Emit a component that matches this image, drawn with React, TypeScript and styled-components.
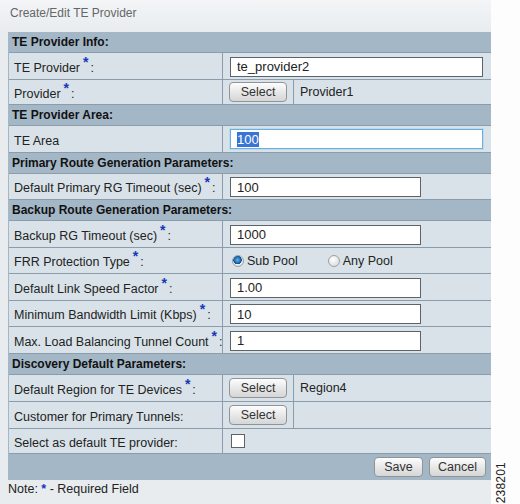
import React from 'react';
import styled, { createGlobalStyle } from 'styled-components';

const GlobalStyle = createGlobalStyle`
  html, body {
    margin: 0;
    padding: 0;
    background: #ffffff;
  }
  body {
    font-family: "Liberation Sans", Arial, sans-serif;
    font-size: 12px;
    color: #222;
  }
`;

const Page = styled.div`
  display: flex;
  width: 520px;
  height: 504px;
  overflow: hidden;
`;

const Main = styled.div`
  width: 491px;
  background: #e8ecef;
  padding-left: 8px;
  box-sizing: border-box;
  display: flex;
  flex-direction: column;
`;

const Side = styled.div`
  flex: 1;
  background: #fdfdfd;
  display: flex;
  align-items: flex-end;
  justify-content: center;
  padding-bottom: 1px;
`;

const FigNumber = styled.span`
  writing-mode: vertical-rl;
  transform: rotate(180deg);
  font-size: 12px;
  color: #222;
  letter-spacing: 0.2px;
  margin-left: -9px;
`;

const Title = styled.div`
  height: 32px;
  padding: 6px 0 0 10px;
  margin-left: -8px;
  box-sizing: border-box;
  color: #666;
  font-size: 12px;
  background: linear-gradient(#f3f5f7, #e8ecef);
`;

const Table = styled.div`
  width: 483px;
  display: flex;
  flex-direction: column;
  border-left: 1px solid #a4b7c7;
`;

const HeaderRow = styled.div`
  height: 20px;
  background: #a4b7c7;
  border-bottom: 1px solid #8b9dab;
  display: flex;
  align-items: center;
  padding-left: 3px;
  font-weight: bold;
  font-size: 12px;
  color: #111;
`;

const Row = styled.div<{ $h?: number }>`
  height: ${(p) => p.$h ?? 26}px;
  display: grid;
  grid-template-columns: 213px 1px 1fr;
  background: #d9e2e9;
  border-bottom: 1px solid #8b9dab;
`;

const Divider = styled.div`
  background: #8b9dab;
`;

const Label = styled.div`
  display: flex;
  align-items: center;
  padding: 3px 0 0 5px;
  font-size: 12.5px;
  color: #222;
  white-space: nowrap;
`;

const Req = styled.span`
  color: #1736b8;
  font-size: 14px;
  font-weight: bold;
  position: relative;
  top: -6px;
  margin: 0 2px 0 3px;
`;

const Value = styled.div`
  display: flex;
  align-items: center;
  padding-left: 7px;
  gap: 6px;
`;

const TextInput = styled.input<{ $w?: number }>`
  width: ${(p) => p.$w ?? 191}px;
  height: 20px;
  box-sizing: border-box;
  border: 1px solid #5d6469;
  background: #fff;
  font-family: "Liberation Sans", Arial, sans-serif;
  font-size: 13px;
  color: #222;
  padding: 0 6px;
  margin: 1px 0 0 0;
  outline: none;
`;

const FocusedInput = styled.div`
  width: 253px;
  height: 20px;
  box-sizing: border-box;
  border: 1px solid #6faed6;
  box-shadow: 0 0 0 1px #b7dcf0;
  background: #fff;
  font-size: 13px;
  display: flex;
  align-items: center;
  padding-left: 6px;
`;

const Selected = styled.span`
  background: #3875d7;
  color: #fff;
  line-height: 15px;
`;

const Button = styled.button<{ $w?: number }>`
  width: ${(p) => p.$w ?? 58}px;
  height: 20px;
  border: 1px solid #8f9497;
  border-radius: 4px;
  background: linear-gradient(#fdfdfd, #e4e4e4 60%, #d6d6d6);
  font-family: "Liberation Sans", Arial, sans-serif;
  font-size: 12.5px;
  color: #333;
  padding: 0;
  margin: 0;
`;

const SplitValue = styled.div`
  display: grid;
  grid-template-columns: 70px 1px 1fr;
  align-items: stretch;
`;

const SplitCell = styled.div`
  display: flex;
  align-items: center;
  padding-left: 6px;
  font-size: 12.5px;
`;

const RadioGroup = styled.label`
  display: flex;
  align-items: center;
  gap: 3px;
  margin-right: 22px;
  font-size: 12.5px;
  color: #222;
`;

const Radio = styled.span<{ $on?: boolean }>`
  width: 12px;
  height: 12px;
  border-radius: 50%;
  border: 1px solid #9aa2a8;
  box-sizing: border-box;
  background: ${(p) =>
    p.$on
      ? 'radial-gradient(circle at 45% 40%, #6cb4e8 0, #1c6fb5 3px, #0d4d8a 4px, #f4f4f4 4.5px, #dcdcdc 6px)'
      : 'radial-gradient(circle at 40% 35%, #ffffff, #d4d4d4)'};
  margin-left: 2px;
`;

const Checkbox = styled.span`
  width: 12px;
  height: 12px;
  border: 1px solid #5d6469;
  background: #fff;
  margin-left: 1px;
`;

const Footer = styled.div`
  height: 26px;
  background: #a4b7c7;
  display: flex;
  justify-content: flex-end;
  align-items: center;
  gap: 6px;
  padding-right: 6px;
`;

const Note = styled.div`
  padding-top: 2px;
  font-size: 12.5px;
  color: #222;
`;

const NoteStar = styled.span`
  color: #1736b8;
  font-weight: bold;
`;

type FieldProps = {
  label: string;
  required?: boolean;
  h?: number;
  children?: React.ReactNode;
};

const Field: React.FC<FieldProps> = ({ label, required, h, children }) => (
  <Row $h={h}>
    <Label>
      {label}
      {required ? (
        <>
          <Req>*</Req>:
        </>
      ) : (
        ':'
      )}
    </Label>
    <Divider />
    {children}
  </Row>
);

export default function App() {
  return (
    <Page>
      <GlobalStyle />
      <Main>
        <Title>Create/Edit TE Provider</Title>
        <Table>
          <HeaderRow>TE Provider Info:</HeaderRow>
          <Field label="TE Provider" required>
            <Value>
              <TextInput $w={253} defaultValue="te_provider2" readOnly />
            </Value>
          </Field>
          <Field label="Provider" required h={24}>
            <SplitValue>
              <SplitCell>
                <Button>Select</Button>
              </SplitCell>
              <Divider />
              <SplitCell>Provider1</SplitCell>
            </SplitValue>
          </Field>
          <HeaderRow>TE Provider Area:</HeaderRow>
          <Row>
            <Label>TE Area</Label>
            <Divider />
            <Value>
              <FocusedInput>
                <Selected>100</Selected>
              </FocusedInput>
            </Value>
          </Row>
          <HeaderRow>Primary Route Generation Parameters:</HeaderRow>
          <Field label="Default Primary RG Timeout (sec)" required h={25}>
            <Value>
              <TextInput defaultValue="100" readOnly />
            </Value>
          </Field>
          <HeaderRow>Backup Route Generation Parameters:</HeaderRow>
          <Field label="Backup RG Timeout (sec)" required>
            <Value>
              <TextInput defaultValue="1000" readOnly />
            </Value>
          </Field>
          <Field label="FRR Protection Type" required h={25}>
            <Value>
              <RadioGroup>
                <Radio $on />
                Sub Pool
              </RadioGroup>
              <RadioGroup>
                <Radio />
                Any Pool
              </RadioGroup>
            </Value>
          </Field>
          <Field label="Default Link Speed Factor" required>
            <Value>
              <TextInput defaultValue="1.00" readOnly />
            </Value>
          </Field>
          <Field label="Minimum Bandwidth Limit (Kbps)" required h={25}>
            <Value>
              <TextInput defaultValue="10" readOnly />
            </Value>
          </Field>
          <Field label="Max. Load Balancing Tunnel Count" required>
            <Value>
              <TextInput defaultValue="1" readOnly />
            </Value>
          </Field>
          <HeaderRow>Discovery Default Parameters:</HeaderRow>
          <Field label="Default Region for TE Devices" required>
            <SplitValue>
              <SplitCell>
                <Button>Select</Button>
              </SplitCell>
              <Divider />
              <SplitCell>Region4</SplitCell>
            </SplitValue>
          </Field>
          <Field label="Customer for Primary Tunnels">
            <SplitValue>
              <SplitCell>
                <Button>Select</Button>
              </SplitCell>
              <Divider />
              <SplitCell />
            </SplitValue>
          </Field>
          <Field label="Select as default TE provider" h={24}>
            <Value>
              <Checkbox />
            </Value>
          </Field>
          <Footer>
            <Button $w={49}>Save</Button>
            <Button $w={57}>Cancel</Button>
          </Footer>
        </Table>
        <Note>
          Note: <NoteStar>*</NoteStar> - Required Field
        </Note>
      </Main>
      <Side>
        <FigNumber>238201</FigNumber>
      </Side>
    </Page>
  );
}
